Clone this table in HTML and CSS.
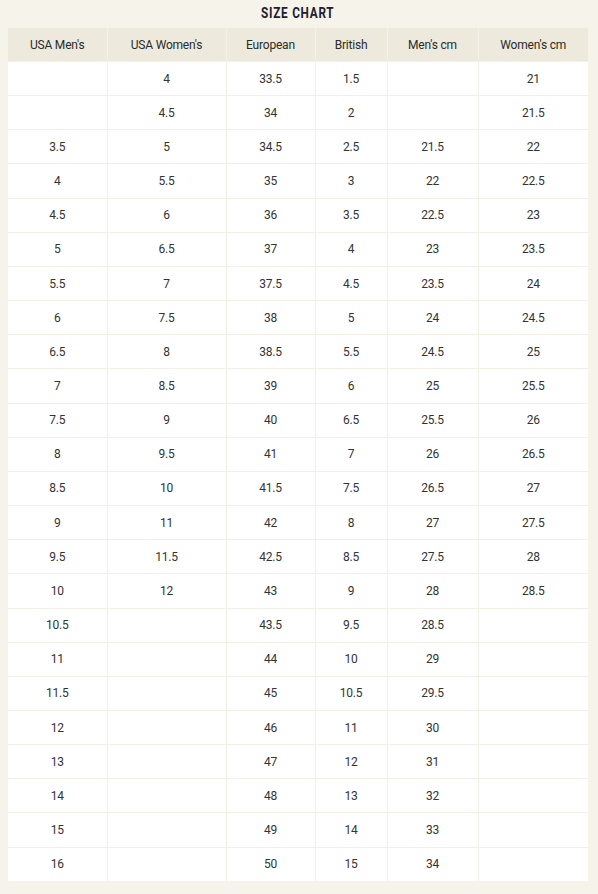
FILE: index.html
```html
<!DOCTYPE html>
<html>
<head>
<meta charset="utf-8">
<link rel="stylesheet" href="styles.css">
</head>
<body>
<div class="page">
  <h2 class="title"><span class="title-text">SIZE CHART</span></h2>
  <table class="chart">
    <colgroup>
      <col class="c1"><col class="c2"><col class="c3"><col class="c4"><col class="c5"><col class="c6">
    </colgroup>
    <thead>
      <tr><th>USA Men's</th><th>USA Women's</th><th>European</th><th>British</th><th>Men's cm</th><th>Women's cm</th></tr>
    </thead>
    <tbody>
      <tr><td></td><td>4</td><td>33.5</td><td>1.5</td><td></td><td>21</td></tr>
      <tr><td></td><td>4.5</td><td>34</td><td>2</td><td></td><td>21.5</td></tr>
      <tr><td>3.5</td><td>5</td><td>34.5</td><td>2.5</td><td>21.5</td><td>22</td></tr>
      <tr><td>4</td><td>5.5</td><td>35</td><td>3</td><td>22</td><td>22.5</td></tr>
      <tr><td>4.5</td><td>6</td><td>36</td><td>3.5</td><td>22.5</td><td>23</td></tr>
      <tr><td>5</td><td>6.5</td><td>37</td><td>4</td><td>23</td><td>23.5</td></tr>
      <tr><td>5.5</td><td>7</td><td>37.5</td><td>4.5</td><td>23.5</td><td>24</td></tr>
      <tr><td>6</td><td>7.5</td><td>38</td><td>5</td><td>24</td><td>24.5</td></tr>
      <tr><td>6.5</td><td>8</td><td>38.5</td><td>5.5</td><td>24.5</td><td>25</td></tr>
      <tr><td>7</td><td>8.5</td><td>39</td><td>6</td><td>25</td><td>25.5</td></tr>
      <tr><td>7.5</td><td>9</td><td>40</td><td>6.5</td><td>25.5</td><td>26</td></tr>
      <tr><td>8</td><td>9.5</td><td>41</td><td>7</td><td>26</td><td>26.5</td></tr>
      <tr><td>8.5</td><td>10</td><td>41.5</td><td>7.5</td><td>26.5</td><td>27</td></tr>
      <tr><td>9</td><td>11</td><td>42</td><td>8</td><td>27</td><td>27.5</td></tr>
      <tr><td>9.5</td><td>11.5</td><td>42.5</td><td>8.5</td><td>27.5</td><td>28</td></tr>
      <tr><td>10</td><td>12</td><td>43</td><td>9</td><td>28</td><td>28.5</td></tr>
      <tr><td>10.5</td><td></td><td>43.5</td><td>9.5</td><td>28.5</td><td></td></tr>
      <tr><td>11</td><td></td><td>44</td><td>10</td><td>29</td><td></td></tr>
      <tr><td>11.5</td><td></td><td>45</td><td>10.5</td><td>29.5</td><td></td></tr>
      <tr><td>12</td><td></td><td>46</td><td>11</td><td>30</td><td></td></tr>
      <tr><td>13</td><td></td><td>47</td><td>12</td><td>31</td><td></td></tr>
      <tr><td>14</td><td></td><td>48</td><td>13</td><td>32</td><td></td></tr>
      <tr><td>15</td><td></td><td>49</td><td>14</td><td>33</td><td></td></tr>
      <tr><td>16</td><td></td><td>50</td><td>15</td><td>34</td><td></td></tr>
    </tbody>
  </table>
</div>
</body>
</html>
```

FILE: styles.css
```css
html, body {
  margin: 0;
  padding: 0;
  background: #f5f3ea;
}
.page {
  padding: 0 10px 0 8px;
  font-family: Roboto, "Liberation Sans", sans-serif;
}
.title {
  margin: 0;
  height: 28px;
  line-height: 26px;
  text-align: center;
  font-family: Roboto, "Liberation Sans", sans-serif;
  font-weight: bold;
  font-size: 14px;
  color: #1c2030;
}
.title-text {
  display: inline-block;
  letter-spacing: 0.9px;
  transform: scaleX(0.84);
}
.chart {
  width: 580px;
  border-collapse: collapse;
  table-layout: fixed;
  background: #ffffff;
}
.c1 { width: 99px; }
.c2 { width: 119px; }
.c3 { width: 89px; }
.c4 { width: 72px; }
.c5 { width: 91px; }
.c6 { width: 110px; }
.chart th, .chart td {
  border: 1px solid #f1efe6;
  text-align: center;
  font-size: 12px;
  color: #333333;
  padding: 0;
  letter-spacing: -0.2px;
}
.chart tr:first-child th, .chart tr:first-child td { border-top: none; }
.chart th:first-child, .chart td:first-child { border-left: none; }
.chart th:last-child, .chart td:last-child { border-right: none; }
.chart tbody tr:last-child td { border-bottom: none; }
.chart th {
  background: #edeadd;
  font-weight: normal;
  height: 33px;
  border-color: #f3f1e8;
  color: #2a2a2a;
}
.chart td {
  height: 33.17px;
}
```
